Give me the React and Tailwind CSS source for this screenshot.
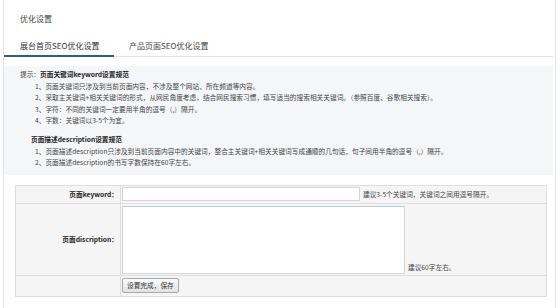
import React from 'react';

const font = { fontFamily: '"Noto Sans CJK SC", "Noto Sans", sans-serif' };

const keywordRules = [
  '1、页面关键词只涉及到当前页面内容，不涉及整个网站、所在频道等内容。',
  '2、采取主关键词+相关关键词的形式，从网民角度考虑，结合网民搜索习惯，填写适当的搜索相关关键词。（参照百度、谷歌相关搜索）。',
  '3、字符：不同的关键词一定要用半角的逗号（,）隔开。',
  '4、字数：关键词以3-5个为宜。',
];

const descRules = [
  '1、页面描述description只涉及到当前页面内容中的关键词，整合主关键词+相关关键词写成通顺的几句话，句子间用半角的逗号（,）隔开。',
  '2、页面描述description的书写字数保持在60字左右。',
];

export default function App() {
  return (
    <div className="w-[558px] h-[308px] bg-white pl-[3px] pr-[2px] overflow-hidden text-[#333]" style={font}>
      <div className="h-full border-l border-r border-[#e4e4e4] pr-[2px]">
        <div className="h-[36px] pt-[13px] pl-[16px] text-[8px] leading-[12px] text-[#444]">优化设置</div>

        <div className="flex h-[21px] border-b border-[#e2e2e2] text-[8px] leading-[12px]">
          <div className="w-[110px] pl-[16px] pt-[4px] border-b-2 border-[#2d5d8c] -mb-px text-[#333]">展台首页SEO优化设置</div>
          <div className="ml-[15px] pt-[4px] text-[#444]">产品页面SEO优化设置</div>
        </div>

        <div className="mt-[9px] bg-[#f5f6f8] pt-[3px] pb-[6px] text-[6.7px] leading-[11.5px] text-[#444]">
          <div className="pl-[16px]">
            提示：<span className="font-bold text-[#222]">页面关键词keyword设置规范</span>
          </div>
          {keywordRules.map((t) => (
            <div key={t} className="pl-[31px]">{t}</div>
          ))}
          <div className="h-[7.5px]" />
          <div className="pl-[27px] font-bold text-[#222]">页面描述description设置规范</div>
          {descRules.map((t) => (
            <div key={t} className="pl-[31px]">{t}</div>
          ))}
        </div>

        <div className="mt-[10px] ml-[11px] w-[532px] border border-[#dedede] bg-[#f5f5f5] text-[6.7px]">
          <div className="grid grid-cols-[105px_1fr] h-[18px] border-b border-[#dedede]">
            <div className="border-r border-[#dedede] flex items-center justify-end pr-[2px] font-bold text-[#222]">页面keyword：</div>
            <div className="flex items-center pl-[1px]">
              <div className="w-[238px] h-[14px] bg-white border border-[#d4d4d4]" />
              <span className="ml-[3px] text-[#444]">建议3-5个关键词，关键词之间用逗号隔开。</span>
            </div>
          </div>
          <div className="grid grid-cols-[105px_1fr] h-[72px] border-b border-[#dedede]">
            <div className="border-r border-[#dedede] flex items-center justify-end pr-[2px] font-bold text-[#222]">页面discription：</div>
            <div className="flex items-end pl-[1px] pb-[1px]">
              <div className="w-[283px] h-[68px] bg-white border border-[#cfd6da] border-t-[#b9cbd6]" />
              <span className="ml-[3px] mb-[1px] text-[#444]">建议60字左右。</span>
            </div>
          </div>
          <div className="grid grid-cols-[105px_1fr] h-[20px]">
            <div className="border-r border-[#dedede]" />
            <div className="flex items-center pl-[1px]">
              <button className="h-[15px] px-[4px] border border-[#a9a9a9] rounded-[2px] bg-gradient-to-b from-[#fbfbfb] to-[#e2e2e2] text-[6.7px] leading-none text-[#333]">设置完成，保存</button>
            </div>
          </div>
        </div>
      </div>
    </div>
  );
}
